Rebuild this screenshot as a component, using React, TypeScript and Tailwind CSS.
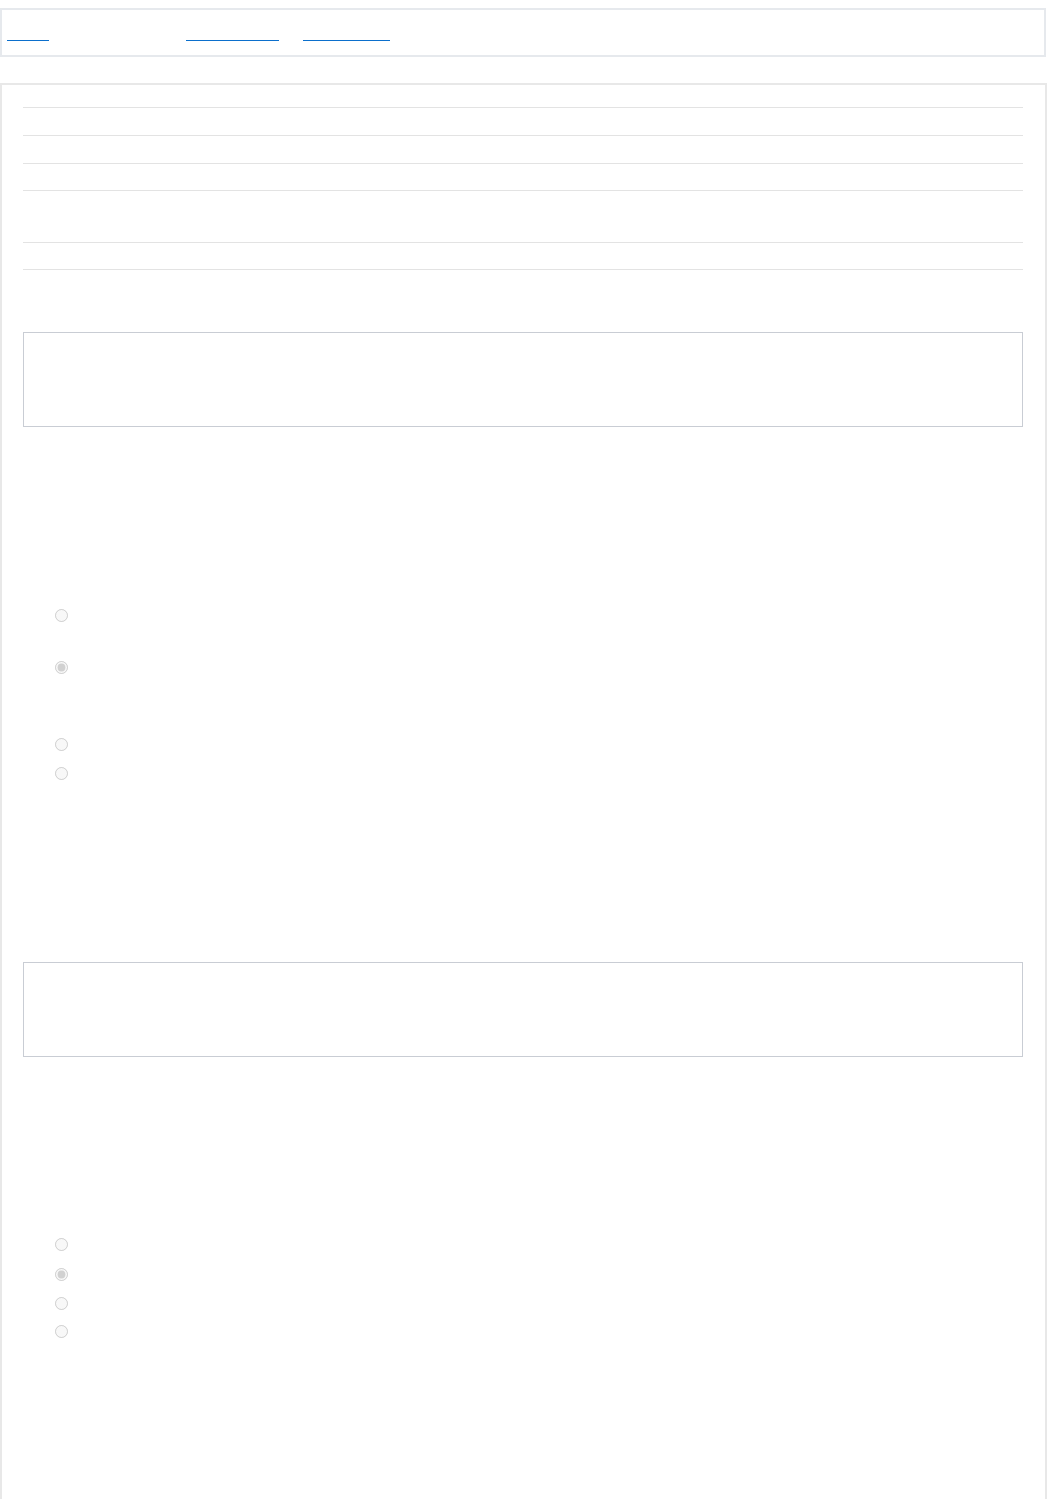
import React from 'react';

// Links in the top bar: only their underline shows
const navLinks = [
  { width: 42, gap: 7 },
  { width: 93, gap: 137 },
  { width: 87, gap: 24 },
];

// Rows of the summary table (height includes the top border)
const rowHeights = [28, 28, 27, 52, 27];

const Radio = ({ checked, mt }: { checked?: boolean; mt: string }) => (
  <div className={`${mt} flex h-[13px] items-center pl-[32px]`}>
    <input
      type="radio"
      disabled
      defaultChecked={checked}
      className="m-0 h-[13px] w-[13px]"
    />
  </div>
);

const Question = ({ marks }: { marks: { checked?: boolean; mt: string }[] }) => (
  <div>
    <div className="h-[95px] border border-[#c9cdd4] bg-white" />
    {marks.map((m, i) => (
      <Radio key={i} checked={m.checked} mt={m.mt} />
    ))}
  </div>
);

export default function App() {
  return (
    <div className="min-h-[1499px] bg-white font-['Liberation_Sans',sans-serif] text-white">
      <nav className="mt-[8px] mr-[1px] flex h-[49px] items-start border-2 border-[#e6e9ed] bg-white">
        {navLinks.map((l, i) => (
          <a
            key={i}
            href="#"
            style={{ marginLeft: i === 0 ? 5 : l.gap, width: l.width }}
            className="mt-[29px] block h-[2px] border-b border-[#0b6fcc]"
          />
        ))}
      </nav>

      <main className="mt-[26px] min-h-[1416px] border-2 border-b-0 border-[#e8e8e8] pl-[21px] pr-[22px] pt-[22px]">
        <div>
          {rowHeights.map((h, i) => (
            <div
              key={i}
              style={{ height: h + (i === rowHeights.length - 1 ? 1 : 0) }}
              className={`border-t border-[#e3e3e3] ${i === rowHeights.length - 1 ? 'border-b' : ''}`}
            />
          ))}
        </div>

        <div className="mt-[62px]">
          <Question
            marks={[
              { mt: 'mt-[182px]' },
              { mt: 'mt-[39px]', checked: true },
              { mt: 'mt-[64px]' },
              { mt: 'mt-[16px]' },
            ]}
          />
        </div>

        <div className="mt-[182px]">
          <Question
            marks={[
              { mt: 'mt-[181px]' },
              { mt: 'mt-[17px]', checked: true },
              { mt: 'mt-[16px]' },
              { mt: 'mt-[15px]' },
            ]}
          />
        </div>
      </main>
    </div>
  );
}
